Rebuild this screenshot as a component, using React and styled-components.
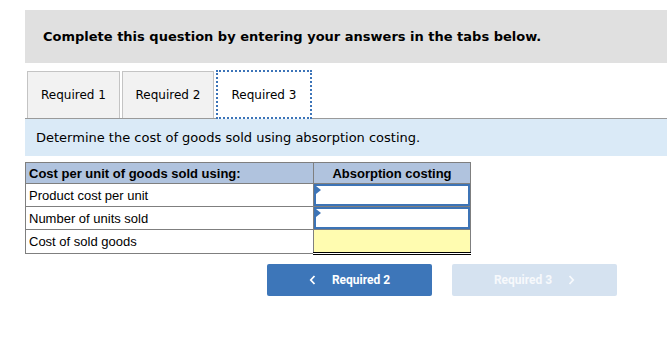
import React from 'react';
import styled, { createGlobalStyle } from 'styled-components';

const GlobalStyle = createGlobalStyle`
  html, body {
    margin: 0;
    padding: 0;
    background: #fff;
  }
`;

const Page = styled.div`
  width: 667px;
  height: 344px;
  padding: 10px 0 0 25px;
  box-sizing: border-box;
  overflow: hidden;
`;

const Instructions = styled.div`
  height: 53px;
  background: #e0e0e0;
  display: flex;
  align-items: center;
  padding-left: 18px;
  font-family: 'DejaVu Sans', Verdana, sans-serif;
  font-weight: bold;
  font-size: 13px;
  color: #000;
`;

const TabBar = styled.div`
  display: flex;
  gap: 2px;
  margin-top: 8px;
  padding-left: 2px;
  border-bottom: 1px solid #9a9a9a;
  height: 47px;
`;

const Tab = styled.div`
  width: ${(p) => p.$w}px;
  box-sizing: border-box;
  display: flex;
  align-items: center;
  justify-content: center;
  font-family: 'DejaVu Sans', Verdana, sans-serif;
  font-size: 12px;
  color: #000;
  background: ${(p) => (p.$active ? '#fff' : '#f2f2f2')};
  border: ${(p) => (p.$active ? '2px dotted #3c74b8' : '1px solid #c4c4c4')};
  border-bottom: ${(p) => (p.$active ? '2px dotted #3c74b8' : 'none')};
  height: ${(p) => (p.$active ? '49px' : '47px')};
  margin-top: ${(p) => (p.$active ? '-1px' : '0')};
  position: relative;
  z-index: 1;
`;

const Prompt = styled.div`
  height: 37px;
  background: #daeaf7;
  display: flex;
  align-items: center;
  padding-left: 11px;
  font-family: 'DejaVu Sans', Verdana, sans-serif;
  font-size: 13px;
  color: #000;
`;

const Table = styled.table`
  margin-top: 6px;
  border-collapse: collapse;
  font-family: 'Liberation Sans', Arial, sans-serif;
  font-size: 13px;
  color: #000;
`;

const HeadCell = styled.th`
  background: #b0c3de;
  border: 1px solid #7f7f7f;
  height: 21px;
  padding: 0 3px;
  font-weight: bold;
  text-align: ${(p) => p.$align || 'left'};
  width: ${(p) => p.$w}px;
  box-sizing: border-box;
`;

const LabelCell = styled.td`
  border: 1px solid #7f7f7f;
  height: 22px;
  padding: 0 3px;
  box-sizing: border-box;
`;

const InputCell = styled.td`
  padding: 0;
  height: 22px;
  border: 1px solid #7f7f7f;
  position: relative;
  background: ${(p) => (p.$total ? '#fffcb0' : '#fff')};
  ${(p) => (p.$total ? 'border-bottom: 3px double #000;' : '')}
`;

const InputBox = styled.div`
  position: absolute;
  inset: 0;
  border: 2px solid #3d74b6;
  background: #fff;
`;

const Marker = styled.span`
  position: absolute;
  left: 0;
  top: 0;
  width: 0;
  height: 0;
  border-top: 4px solid transparent;
  border-bottom: 4px solid transparent;
  border-left: 5px solid #3d74b6;
`;

const NavRow = styled.div`
  display: flex;
  gap: 20px;
  margin-top: 9px;
  padding-left: 242px;
`;

const NavButton = styled.div`
  width: 165px;
  height: 32px;
  border-radius: 2px;
  background: ${(p) => (p.$disabled ? '#d5e2f0' : '#3d76b9')};
  color: ${(p) => (p.$disabled ? '#f7f9fc' : '#fff')};
  display: flex;
  align-items: center;
  justify-content: center;
  gap: 16px;
  font-family: Roboto, 'Liberation Sans', sans-serif;
  font-weight: bold;
  font-size: 12px;
`;

const Chevron = ({ dir }) => (
  <svg width="7" height="10" viewBox="0 0 7 10">
    <path
      d={dir === 'left' ? 'M5.5 1 L1.8 5 L5.5 9' : 'M1.5 1 L5.2 5 L1.5 9'}
      fill="none"
      stroke="currentColor"
      strokeWidth="1.8"
    />
  </svg>
);

export default function App() {
  return (
    <Page>
      <GlobalStyle />
      <Instructions>Complete this question by entering your answers in the tabs below.</Instructions>
      <TabBar>
        <Tab $w={93}>Required 1</Tab>
        <Tab $w={92}>Required 2</Tab>
        <Tab $w={96} $active>
          Required 3
        </Tab>
      </TabBar>
      <Prompt>Determine the cost of goods sold using absorption costing.</Prompt>
      <Table>
        <thead>
          <tr>
            <HeadCell $w={288}>Cost per unit of goods sold using:</HeadCell>
            <HeadCell $w={157} $align="center">
              Absorption costing
            </HeadCell>
          </tr>
        </thead>
        <tbody>
          <tr>
            <LabelCell>Product cost per unit</LabelCell>
            <InputCell>
              <InputBox>
                <Marker />
              </InputBox>
            </InputCell>
          </tr>
          <tr>
            <LabelCell>Number of units sold</LabelCell>
            <InputCell>
              <InputBox>
                <Marker />
              </InputBox>
            </InputCell>
          </tr>
          <tr>
            <LabelCell>Cost of sold goods</LabelCell>
            <InputCell $total />
          </tr>
        </tbody>
      </Table>
      <NavRow>
        <NavButton>
          <Chevron dir="left" />
          Required 2
        </NavButton>
        <NavButton $disabled>
          Required 3
          <Chevron dir="right" />
        </NavButton>
      </NavRow>
    </Page>
  );
}
